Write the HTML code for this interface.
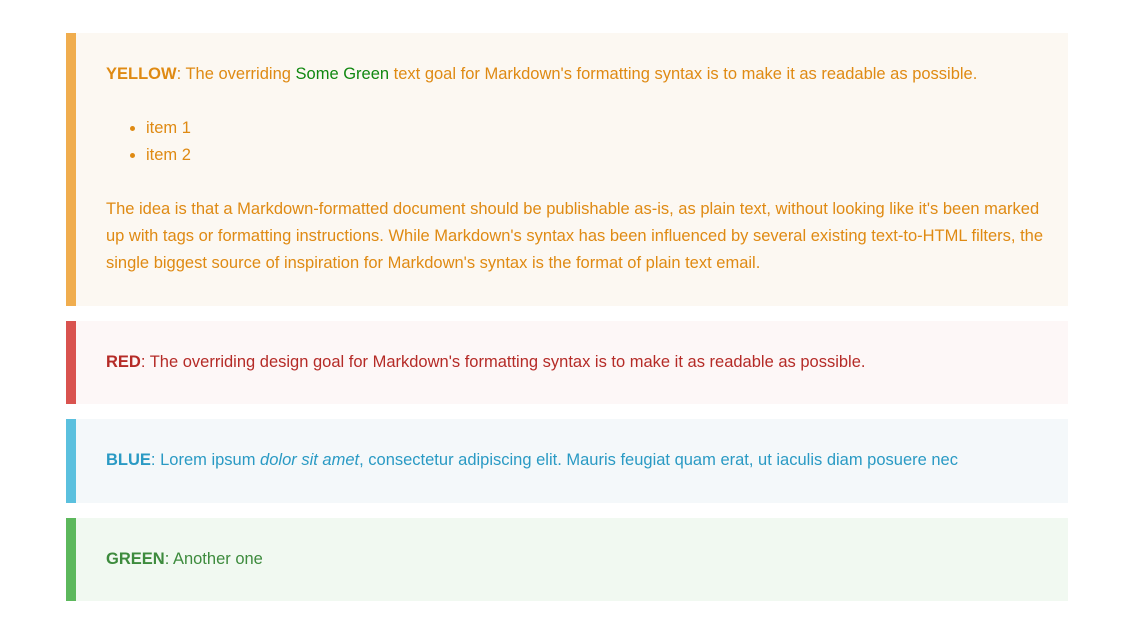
<!DOCTYPE html>
<html><head><meta charset="utf-8"><style>
body{margin:0;background:#fff;font-family:"Liberation Sans",sans-serif;font-size:16.5px;}
.c{position:absolute;left:66px;width:942px;border-left:10px solid;padding-left:30px;padding-right:20px;line-height:27px;white-space:nowrap;}
.c p{margin:0}
.y{top:33px;height:273px;background:#fcf8f2;border-color:#f0ad4e;color:#df8a13}
.r{top:321px;height:83px;background:#fdf7f7;border-color:#d9534f;color:#b52b27}
.b{top:419px;height:84px;background:#f4f8fa;border-color:#5bc0de;color:#2a9ac4}
.g{top:518px;height:83px;background:#f1f9f1;border-color:#5cb85c;color:#3d8b3d}
ul{margin:0;padding-left:40px}
</style></head><body>
<div class="c y">
<p style="margin-top:28px"><b>YELLOW</b>: The overriding <span style="color:#118811">Some Green</span> text goal for Markdown's formatting syntax is to make it as readable as possible.</p>
<ul style="margin-top:27px"><li>item 1</li><li>item 2</li></ul>
<p style="margin-top:27px">The idea is that a Markdown-formatted document should be publishable as-is, as plain text, without looking like it's been marked<br>up with tags or formatting instructions. While Markdown's syntax has been influenced by several existing text-to-HTML filters, the<br>single biggest source of inspiration for Markdown's syntax is the format of plain text email.</p>
</div>
<div class="c r"><p style="margin-top:28px"><b>RED</b>: The overriding design goal for Markdown's formatting syntax is to make it as readable as possible.</p></div>
<div class="c b"><p style="margin-top:28px"><b>BLUE</b>: Lorem ipsum <i>dolor sit amet</i>, consectetur adipiscing elit. Mauris feugiat quam erat, ut iaculis diam posuere nec</p></div>
<div class="c g"><p style="margin-top:28px"><b>GREEN</b>: Another one</p></div>
</body></html>
